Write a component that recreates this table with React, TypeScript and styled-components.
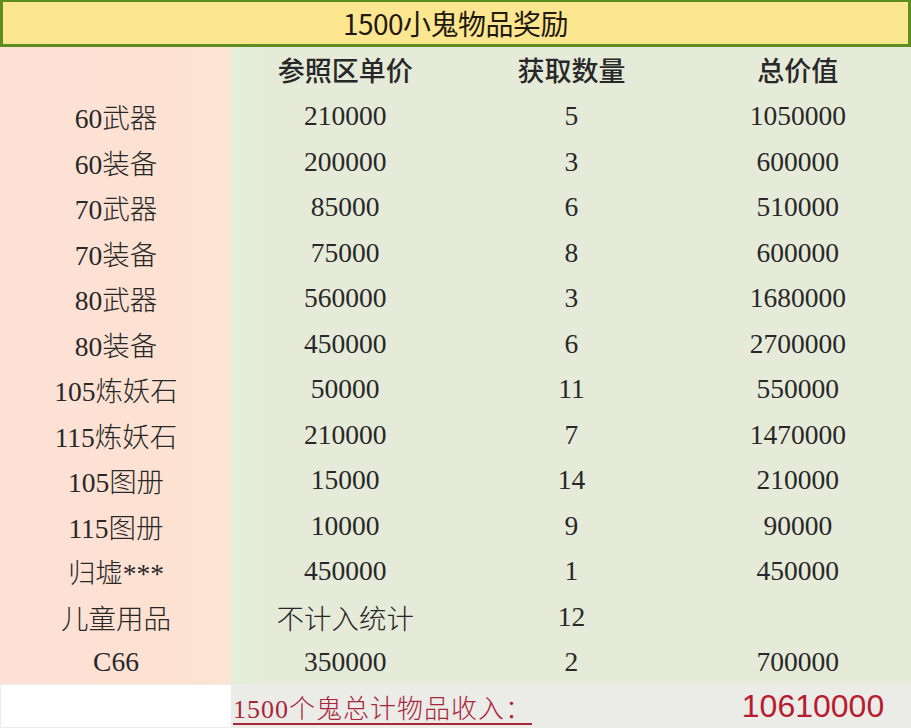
import React from "react";
import styled, { createGlobalStyle } from "styled-components";

const Global = createGlobalStyle`
  html, body { margin: 0; padding: 0; background: #ffffff; }
  body { width: 911px; height: 728px; overflow: hidden; }
`;

const Sheet = styled.div`
  width: 911px;
  height: 728px;
  display: flex;
  flex-direction: column;
  font-family: "Liberation Serif", "Noto Sans CJK SC", serif;
  color: #262626;
`;

const TitleBar = styled.div`
  height: 47px;
  box-sizing: border-box;
  background: #fde690;
  border: 3px solid #5e8d1f;
  border-top-width: 2px;
  display: flex;
  align-items: center;
  justify-content: center;
  font-family: "Noto Sans CJK SC", sans-serif;
  font-size: 28px;
  font-weight: 400;
  color: #1f1a10;
  letter-spacing: -0.5px;
`;

const Body = styled.div`
  flex: 1;
  display: grid;
  grid-template-columns: 232px 1fr;
  background: linear-gradient(90deg, #fde0d6 0px, #fde3d1 226px, #e3efd9 236px, #e5ebd8 260px, #e6ebd9 100%);
`;

const Table = styled.div`
  grid-column: 1 / span 2;
  display: grid;
  grid-template-columns: 232px 1fr 1fr 1fr;
  grid-auto-rows: 45.5px;
`;

const Cell = styled.div<{ $head?: boolean }>`
  display: flex;
  align-items: center;
  justify-content: center;
  font-size: ${(p) => (p.$head ? "27px" : "27.5px")};
  font-family: ${(p) =>
    p.$head
      ? '"Noto Sans CJK SC", sans-serif'
      : '"Liberation Serif", "Noto Sans CJK SC", serif'};
  font-weight: ${(p) => (p.$head ? 500 : 300)};
  padding-top: ${(p) => (p.$head ? "0" : "2px")};
  color: #282828;
`;

const TotalRow = styled.div`
  grid-column: 1 / span 2;
  display: grid;
  grid-template-columns: 232px 1fr;
  height: 44px;
`;

const BlankCell = styled.div`
  background: #ffffff;
  border: 1px solid #ececec;
`;

const TotalArea = styled.div`
  background: #ebebe8;
  display: flex;
  align-items: center;
  justify-content: space-between;
  padding: 0 26px 0 1px;
`;

const TotalLabel = styled.span`
  font-family: "Liberation Serif", "Noto Sans CJK SC", serif;
  font-size: 26px;
  font-weight: 300;
  color: #a8263a;
  text-decoration: underline;
  text-decoration-thickness: 2px;
  text-underline-offset: 5px;
  letter-spacing: 1px;
  white-space: pre;
`;

const TotalValue = styled.span`
  font-family: "Liberation Sans", Arial, sans-serif;
  font-size: 32px;
  color: #b81c2e;
  width: 144px;
  text-align: center;
`;

const rows: [string, string, string, string][] = [
  ["60武器", "210000", "5", "1050000"],
  ["60装备", "200000", "3", "600000"],
  ["70武器", "85000", "6", "510000"],
  ["70装备", "75000", "8", "600000"],
  ["80武器", "560000", "3", "1680000"],
  ["80装备", "450000", "6", "2700000"],
  ["105炼妖石", "50000", "11", "550000"],
  ["115炼妖石", "210000", "7", "1470000"],
  ["105图册", "15000", "14", "210000"],
  ["115图册", "10000", "9", "90000"],
  ["归墟***", "450000", "1", "450000"],
  ["儿童用品", "不计入统计", "12", ""],
  ["C66", "350000", "2", "700000"],
];

export default function App() {
  return (
    <>
      <Global />
      <Sheet>
        <TitleBar>1500小鬼物品奖励</TitleBar>
        <Body>
          <Table>
            <Cell $head />
            <Cell $head>参照区单价</Cell>
            <Cell $head>获取数量</Cell>
            <Cell $head>总价值</Cell>
            {rows.map((r) => (
              <React.Fragment key={r[0]}>
                <Cell>{r[0]}</Cell>
                <Cell>{r[1]}</Cell>
                <Cell>{r[2]}</Cell>
                <Cell>{r[3]}</Cell>
              </React.Fragment>
            ))}
          </Table>
          <TotalRow>
            <BlankCell />
            <TotalArea>
              <TotalLabel>1500个鬼总计物品收入：</TotalLabel>
              <TotalValue>10610000</TotalValue>
            </TotalArea>
          </TotalRow>
        </Body>
      </Sheet>
    </>
  );
}
